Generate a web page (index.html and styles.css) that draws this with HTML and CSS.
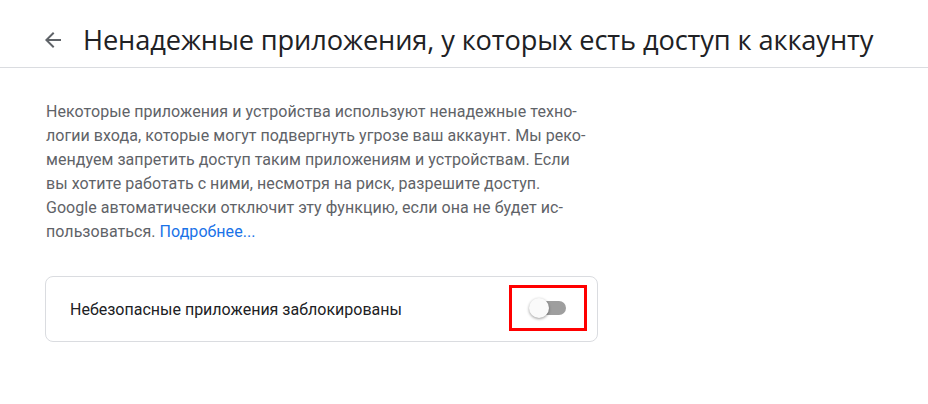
FILE: index.html
```html
<!DOCTYPE html>
<html lang="ru">
<head>
<meta charset="utf-8">
<link rel="stylesheet" href="styles.css">
</head>
<body>
<header class="topbar">
  <span class="back" aria-label="Назад">
    <svg width="16" height="16" viewBox="0 0 16 16"><path d="M16 7H3.83l5.59-5.59L8 0 0 8l8 8 1.41-1.41L3.83 9H16z" fill="#5f6368"/></svg>
  </span>
  <h1 class="title">Ненадежные приложения, у которых есть доступ к аккаунту</h1>
</header>
<main class="content">
  <p class="desc">Некоторые приложения и устройства используют ненадежные техно-<br>логии входа, которые могут подвергнуть угрозе ваш аккаунт. Мы реко-<br>мендуем запретить доступ таким приложениям и устройствам. Если<br>вы хотите работать с ними, несмотря на риск, разрешите доступ.<br>Google автоматически отключит эту функцию, если она не будет ис-<br>пользоваться. <a class="link" href="#">Подробнее...</a></p>
  <div class="card">
    <span class="label">Небезопасные приложения заблокированы</span>
    <div class="highlight">
      <div class="toggle"><span class="track"></span><span class="thumb"></span></div>
    </div>
  </div>
</main>
</body>
</html>
```
FILE: styles.css
```css
html, body { margin: 0; padding: 0; background: #fff; }
body { font-family: Roboto, "Noto Sans", sans-serif; }
.topbar {
  height: 55px;
  padding-top: 12px;
  border-bottom: 1px solid #dadce0;
  display: flex;
  align-items: center;
  padding-left: 45px;
  box-sizing: content-box;
}
.back { display: flex; width: 16px; height: 16px; margin-right: 22px; }
.title {
  margin: 0;
  font-family: "Open Sans", sans-serif;
  font-weight: 400;
  font-size: 27.2px;
  color: #202124;
  white-space: nowrap;
  letter-spacing: -0.1px;
}
.content { padding: 32px 0 0 46px; }
.desc {
  margin: 0;
  font-size: 16px;
  line-height: 24px;
  color: #5f6368;
  white-space: nowrap;
  letter-spacing: 0.05px;
}
.link { color: #1a73e8; text-decoration: none; }
.card {
  margin-top: 32px;
  margin-left: -1px;
  width: 553px;
  height: 66px;
  border: 1px solid #dadce0;
  border-radius: 8px;
  display: flex;
  align-items: center;
  padding-left: 24px;
  box-sizing: border-box;
}
.label { font-size: 16px; color: #202124; flex: 1; }
.highlight {
  width: 78px;
  height: 46px;
  box-sizing: border-box;
  border: 3px solid #ff0000;
  margin-right: 10px;
  margin-top: -2px;
  display: flex;
  align-items: center;
  padding-left: 17px;
}
.toggle { position: relative; width: 37px; height: 20px; }
.track {
  position: absolute; left: 3px; top: 3px;
  width: 34px; height: 14px; border-radius: 7px;
  background: #9e9e9e;
}
.thumb {
  position: absolute; left: 0; top: 0;
  width: 20px; height: 20px; border-radius: 50%;
  background: #fafafa;
  box-shadow: 0 1px 3px rgba(0,0,0,0.4);
}
```
